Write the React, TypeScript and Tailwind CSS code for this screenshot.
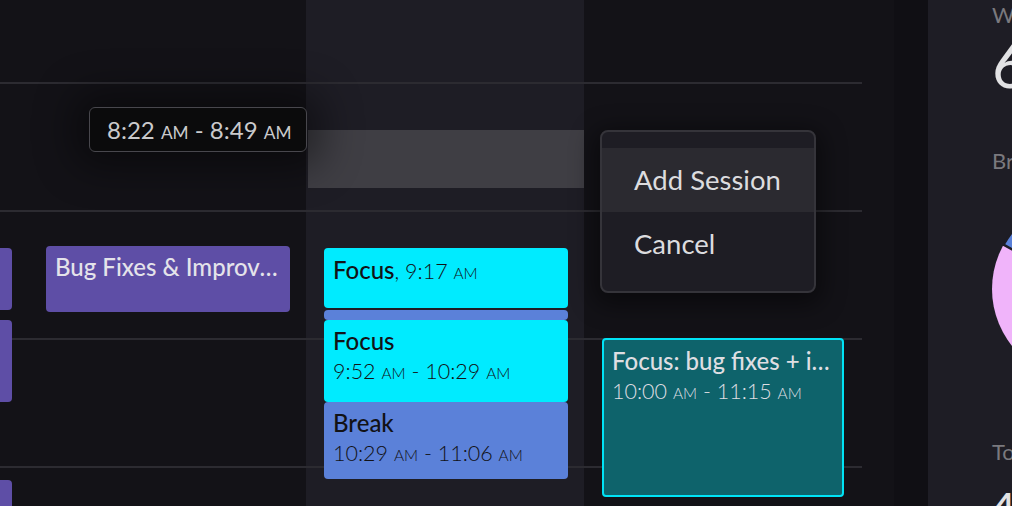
import React from "react";

const Ampm = ({ children }: { children: React.ReactNode }) => (
  <span className="text-[0.72em]">{children}</span>
);

function HourLines() {
  return (
    <div className="flex flex-col">
      <div className="h-[82px]" />
      <div className="h-[128px] border-t-2 border-[#2c2b31]" />
      <div className="h-[128px] border-t-2 border-[#2c2b31]" />
      <div className="h-[128px] border-t-2 border-[#2c2b31]" />
      <div className="h-[128px] border-t-2 border-[#2c2b31]" />
    </div>
  );
}

function Column({ children, today }: { children?: React.ReactNode; today?: boolean }) {
  return (
    <div className={`relative w-[278px] h-[506px] shrink-0 ${today ? "bg-[#1e1d25]" : "bg-[#131217]"}`}>
      <HourLines />
      {children}
    </div>
  );
}

export default function App() {
  return (
    <div className="w-[1012px] h-[506px] overflow-hidden flex bg-[#131217] font-['Lato','Noto_Sans',sans-serif]">
      {/* Calendar area */}
      <div className="relative w-[894px] h-[506px] shrink-0 overflow-hidden">
        <div className="flex ml-[-250px]">
          {/* Column 0 (cut off) */}
          <Column>
            <div className="absolute left-[18px] w-[244px] top-[248px] h-[62px] rounded-[4px] bg-[#5e4ea6]" />
            <div className="absolute left-[18px] w-[244px] top-[320px] h-[82px] rounded-[4px] bg-[#5e4ea6]" />
            <div className="absolute left-[18px] w-[244px] top-[480px] h-[40px] rounded-[4px] bg-[#5e4ea6]" />
          </Column>
          {/* Column 1 */}
          <Column>
            <div className="absolute left-[18px] w-[244px] top-[246px] h-[66px] rounded-[4px] bg-[#5e4ea6] pl-[9px] pr-[12px] pt-[7px]">
              <div className="text-[24px] leading-[28px] font-medium text-[#e4e3ea] truncate">
                Bug Fixes &amp; Improvements
              </div>
            </div>
          </Column>
          {/* Column 2 (today) */}
          <Column today>
            <div className="absolute left-[2px] right-0 top-[130px] h-[58px] bg-[#3f3e44]" />
            <div className="absolute left-[18px] w-[244px] top-[248px] h-[60px] rounded-[4px] bg-[#00ebff] pl-[9px] pt-[8px] text-[#121216]">
              <div className="leading-[28px] whitespace-nowrap">
                <span className="text-[24px] font-medium">Focus</span>
                <span className="text-[21.5px] font-light">
                  , 9:17 <Ampm>AM</Ampm>
                </span>
              </div>
            </div>
            <div className="absolute left-[18px] w-[244px] top-[310px] h-[10px] rounded-[4px] bg-[#5b81d9]" />
            <div className="absolute left-[18px] w-[244px] top-[320px] h-[82px] rounded-[4px] bg-[#00ebff] pl-[9px] pt-[7px] text-[#121216]">
              <div className="text-[24px] leading-[28px] font-medium">Focus</div>
              <div className="text-[21.5px] leading-[33px] font-light whitespace-nowrap">
                9:52 <Ampm>AM</Ampm> - 10:29 <Ampm>AM</Ampm>
              </div>
            </div>
            <div className="absolute left-[18px] w-[244px] top-[402px] h-[77px] rounded-[4px] bg-[#5b81d9] pl-[9px] pt-[7px] text-[#121216]">
              <div className="text-[24px] leading-[28px] font-medium">Break</div>
              <div className="text-[21.5px] leading-[33px] font-light whitespace-nowrap">
                10:29 <Ampm>AM</Ampm> - 11:06 <Ampm>AM</Ampm>
              </div>
            </div>
          </Column>
          {/* Column 3 */}
          <Column>
            <div className="absolute left-[18px] w-[242px] top-[338px] h-[159px] rounded-[4px] bg-[#0e636b] border-2 border-[#00e3f5] pl-[8px] pr-[10px] pt-[7px] text-[#dedee2]">
              <div className="text-[24px] leading-[28px] font-medium truncate">
                Focus: bug fixes + improvements
              </div>
              <div className="text-[21.5px] leading-[33px] font-light whitespace-nowrap">
                10:00 <Ampm>AM</Ampm> - 11:15 <Ampm>AM</Ampm>
              </div>
            </div>
          </Column>
        </div>

        {/* Drag tooltip */}
        <div className="absolute left-[89px] top-[107px] w-[218px] h-[45px] rounded-[6px] border border-[#48474d] bg-[#0b0b0c] shadow-[0_0_40px_14px_rgba(0,0,0,0.45)] flex items-center pl-[17px]">
          <span className="text-[24px] leading-none text-[#cacacc] whitespace-nowrap">
            8:22 <Ampm>AM</Ampm> - 8:49 <Ampm>AM</Ampm>
          </span>
        </div>

        {/* Context menu */}
        <div className="absolute left-[600px] top-[130px] w-[216px] h-[163px] rounded-[8px] border-2 border-[#35343a] bg-[#1e1d24] shadow-[0_6px_24px_6px_rgba(0,0,0,0.45)] pt-[16px] overflow-hidden">
          <div className="h-[64px] bg-[#2b2a30] flex items-center pl-[32px] text-[27.5px] text-[#dcdcdf]">
            Add Session
          </div>
          <div className="h-[64px] flex items-center pl-[32px] text-[27.5px] text-[#dcdcdf]">
            Cancel
          </div>
        </div>
      </div>

      {/* Divider strip */}
      <div className="w-[34px] h-[506px] shrink-0 bg-[#100f14]" />

      {/* Right stats panel */}
      <div className="w-[300px] h-[506px] shrink-0 bg-[#1e1d25] pl-[64px] whitespace-nowrap">
        <div className="text-[22px] leading-[30px] text-[#7a797e]">Weekly Focus</div>
        <div className="mt-[3px] text-[62px] leading-none text-[#e2e2e4]">6h 12m</div>
        <div className="mt-[51px] text-[22px] leading-[30px] text-[#7a797e]">Breakdown</div>
        <svg className="mt-[22px] block" width="182" height="182" viewBox="0 0 182 182">
          <circle cx="91" cy="91" r="91" fill="#f0b4fa" />
          <path
            d="M91 91 L11.5 46.7 A91 91 0 0 1 60 5.4 Z"
            fill="#5a80d8"
            stroke="#1e1d25"
            strokeWidth="2.5"
            strokeLinejoin="round"
          />
        </svg>
        <div className="mt-[57px] text-[22px] leading-[30px] text-[#7a797e]">Total Sessions</div>
        <div className="mt-[20px] text-[40px] leading-none font-semibold text-[#e2e2e4]">4</div>
      </div>
    </div>
  );
}
